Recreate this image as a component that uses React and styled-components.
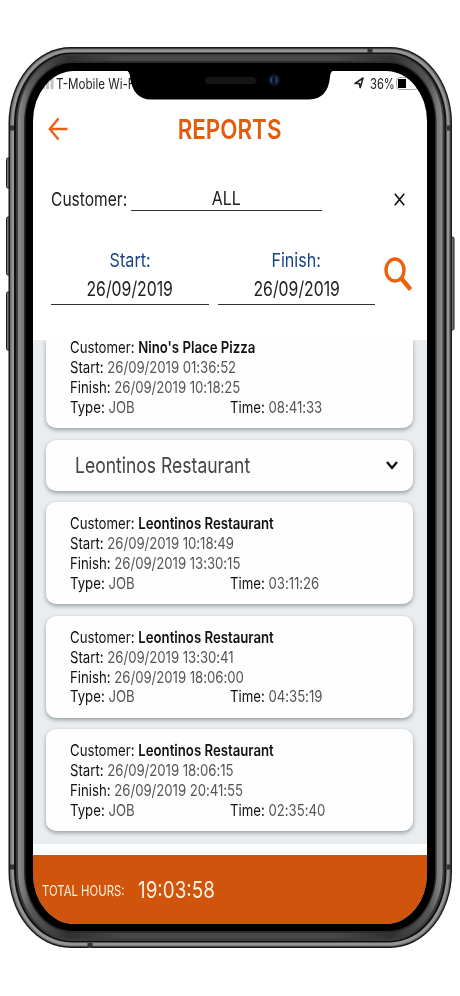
import React from 'react';
import styled, { createGlobalStyle } from 'styled-components';

const reports = [
  { customer: 'Leontinos Restaurant', start: '26/09/2019 10:18:49', finish: '26/09/2019 13:30:15', time: '03:11:26' },
  { customer: 'Leontinos Restaurant', start: '26/09/2019 13:30:41', finish: '26/09/2019 18:06:00', time: '04:35:19' },
  { customer: 'Leontinos Restaurant', start: '26/09/2019 18:06:15', finish: '26/09/2019 20:41:55', time: '02:35:40' },
];

const PhoneFrame = () => (
  <FrameSvg viewBox="0 0 460 996">
    <defs>
      <mask id="screen">
        <rect width="460" height="996" fill="#fff" />
        <rect x="33" y="71" width="394" height="853" rx="41" ry="50" fill="#000" />
      </mask>
      <linearGradient id="bevel">
        <stop offset="0" stopColor="#8c8c8c" />
        <stop offset=".03" stopColor="#585858" />
        <stop offset=".12" stopColor="#303030" />
        <stop offset=".25" stopColor="#484848" />
        <stop offset=".75" stopColor="#484848" />
        <stop offset=".88" stopColor="#303030" />
        <stop offset=".97" stopColor="#585858" />
        <stop offset="1" stopColor="#8c8c8c" />
      </linearGradient>
    </defs>
    <g fill="#777" stroke="#1b1b1b">
      <rect x="6.5" y="158" width="5" height="30" rx="1.5" />
      <rect x="6.5" y="217" width="5" height="58" rx="1.5" />
      <rect x="6.5" y="292" width="5" height="58" rx="1.5" />
      <rect x="449.5" y="237" width="4.5" height="93" rx="1.5" />
    </g>
    <g mask="url(#screen)">
      <rect x="8.5" y="47" width="443.5" height="901" rx="62" ry="76" fill="#181818" />
      <rect x="10" y="48.5" width="440.5" height="898" rx="60" ry="74" fill="#6c6c6c" />
      <rect x="11.5" y="49.5" width="437.5" height="896" rx="59" ry="73" fill="#959595" />
      <rect x="14" y="52.5" width="432.5" height="890" rx="57" ry="71" fill="#111" />
      <rect x="16" y="54" width="428.5" height="887" rx="56" ry="69" fill="#3c3c3c" />
      <rect x="18" y="55.5" width="424.5" height="883" rx="54" ry="67" fill="url(#bevel)" />
      <rect x="24" y="61" width="412.5" height="872" rx="49" ry="61" fill="#2c2c2c" />
      <rect x="25.5" y="63" width="409.5" height="868" rx="47" ry="58" fill="#000" />
    </g>
    <path d="M10 128h4M447 128h4M10 867h4M447 867h4M370 48v5M90 943v5" stroke="#333" strokeWidth="5" />
    <path d="M126 70Q130 72 130 77Q133 99.500 151 99.500H309Q328 99 330 77Q330 71 335 70Z" />
    <rect x="205" y="77" width="51" height="7" rx="3.5" fill="#151515" />
    <circle cx="274" cy="80" r="6" fill="#0d1320" />
    <path d="M272 77q-2 3 0 6M276 77q2 3 0 6" fill="none" stroke="#284f87" strokeWidth="1.3" />
  </FrameSvg>
);

const ReportCard = ({ customer, start, finish, time, cut }) => (
  <Card $cut={cut}>
    <Line>Customer: <b>{customer}</b></Line>
    <Line>Start: <span>{start}</span></Line>
    <Line>Finish: <span>{finish}</span></Line>
    <LineGroup>
      <Line>Type: <span>JOB</span></Line>
      <Line>Time: <span>{time}</span></Line>
    </LineGroup>
  </Card>
);

const App = () => (
  <Page>
    <GlobalStyle />
    <Screen>
      <StatusBar>
        <StatusIcon viewBox="0 0 18 14" width="18" height="14">
          <path d="M1 8h3v5H1zM5 6h3v7H5zM9 4h3v9H9zM13.500 2h3v11h-3z" fill="#c4c4c4" />
        </StatusIcon>
        <Carrier><Text $size={14} $scale={0.83}>T-Mobile Wi-Fi</Text></Carrier>
        <StatusIcon viewBox="0 0 10 12" width="10" height="12">
          <path d="M1 6.400 9 1 6.200 10.600 5.300 6.500Z" fill="none" stroke="#222" strokeWidth="1.6" strokeLinejoin="round" />
        </StatusIcon>
        <Percent><Text $size={14} $scale={0.8}>36%</Text></Percent>
        <StatusIcon viewBox="0 0 23 13" width="23" height="13">
          <rect x=".5" y=".5" width="21" height="12" rx="3" fill="none" stroke="#aaa" />
          <path d="M2 2h8v9H2z" />
        </StatusIcon>
      </StatusBar>

      <TitleBar>
        <svg width="20" height="24" viewBox="0 0 20 24" fill="none" stroke="#e8601a" strokeWidth="2.4">
          <path d="M10.500 1.500 1.800 12 10.500 22.500M1.800 12H19.500" />
        </svg>
        <Title><Text $size={27} $weight={600} $scale={0.83} $origin="center">REPORTS</Text></Title>
      </TitleBar>

      <CustomerRow>
        <CustomerLabel><Text $size={19} $scale={0.82}>Customer:</Text></CustomerLabel>
        <CustomerInput><Text $size={19} $scale={0.84} $origin="center">ALL</Text></CustomerInput>
        <svg width="11" height="13" viewBox="0 0 11 13" stroke="#111" strokeWidth="1.6">
          <path d="M.8.8 10.200 12.200M10.200.8.8 12.200" />
        </svg>
      </CustomerRow>

      <DateRow>
        <DateField>
          <DateLabel><Text $size={19} $scale={0.85} $origin="center">Start:</Text></DateLabel>
          <DateInput><Text $size={20} $scale={0.79} $origin="center">26/09/2019</Text></DateInput>
        </DateField>
        <DateField>
          <DateLabel><Text $size={19} $scale={0.85} $origin="center">Finish:</Text></DateLabel>
          <DateInput><Text $size={20} $scale={0.79} $origin="center">26/09/2019</Text></DateInput>
        </DateField>
        <SearchIcon width="29" height="35" viewBox="0 0 29 35" fill="none" stroke="#eb610e">
          <ellipse cx="11" cy="13" rx="9" ry="11" strokeWidth="3.4" />
          <path d="m17.500 21.500 9 11" strokeWidth="4.4" />
        </SearchIcon>
      </DateRow>

      <List>
        <ReportCard cut customer="Nino's Place Pizza" start="26/09/2019 01:36:52" finish="26/09/2019 10:18:25" time="08:41:33" />
        <GroupHeader>
          <Text $size={22} $scale={0.797}>Leontinos Restaurant</Text>
          <svg width="12" height="9" viewBox="0 0 12 9" fill="none" stroke="#111" strokeWidth="2.4">
            <path d="m1 1 5 6 5-6" />
          </svg>
        </GroupHeader>
        {reports.map((report) => (
          <ReportCard key={report.start} {...report} />
        ))}
      </List>

      <Footer>
        <FooterLabel><Text $size={14} $scale={0.81}>TOTAL HOURS:</Text></FooterLabel>
        <Text $size={23} $scale={0.82}>19:03:58</Text>
      </Footer>
    </Screen>
    <PhoneFrame />
  </Page>
);

const GlobalStyle = createGlobalStyle`
  * {
    box-sizing: border-box;
  }
  body {
    margin: 0;
    background: #fff;
    font-family: Inter, "Liberation Sans", sans-serif;
    color: #222;
  }
  svg {
    flex: none;
  }
`;

const Page = styled.div`
  position: relative;
  width: 460px;
  height: 996px;
  padding: 71px 33px 72px;
  overflow: hidden;
`;

const Screen = styled.div`
  display: flex;
  flex-direction: column;
  width: 394px;
  height: 853px;
  overflow: hidden;
  border-radius: 41px / 50px;
  background: #fff;
`;

const FrameSvg = styled.svg`
  position: absolute;
  inset: 0;
  width: 460px;
  height: 996px;
  pointer-events: none;
`;

const Text = styled.span`
  display: inline-block;
  white-space: nowrap;
  font-size: ${({ $size }) => $size}px;
  font-weight: ${({ $weight }) => $weight || 400};
  transform: scaleX(${({ $scale }) => $scale});
  transform-origin: ${({ $origin }) => $origin || 'left'};
`;

const StatusBar = styled.div`
  display: flex;
  align-items: center;
  height: 24px;
  padding-left: 4px;
`;

const StatusIcon = styled.svg`
  display: block;
`;

const Carrier = styled.div`
  width: 299px;
  padding-left: 1px;
`;

const Percent = styled.div`
  width: 32px;
  padding-left: 6px;
`;

const TitleBar = styled.div`
  display: flex;
  align-items: center;
  height: 67px;
  padding-left: 15px;
`;

const Title = styled.div`
  width: 323px;
  padding-top: 2px;
  text-align: center;
  color: #e35b0c;
`;

const CustomerRow = styled.div`
  display: flex;
  align-items: center;
  height: 73px;
  padding: 1px 0 0 18px;
`;

const CustomerLabel = styled.div`
  width: 80px;
`;

const CustomerInput = styled.div`
  width: 191px;
  height: 24px;
  margin-right: 72px;
  border-bottom: 1.5px solid #333;
  text-align: center;
  line-height: 24px;
`;

const DateRow = styled.div`
  display: flex;
  gap: 9px;
  height: 105px;
  padding: 11px 0 0 18px;
`;

const DateField = styled.div`
  width: 157.5px;
  text-align: center;
`;

const DateLabel = styled.div`
  height: 28px;
  line-height: 29px;
  color: #17437f;
`;

const DateInput = styled.div`
  height: 31px;
  line-height: 31px;
  border-bottom: 1.5px solid #333;
`;

const SearchIcon = styled.svg`
  margin-top: 11px;
`;

const List = styled.div`
  display: flex;
  flex-direction: column;
  gap: 11.5px;
  height: 504px;
  padding: 0 14px 0 13px;
  overflow: hidden;
  background: #e9edef;
`;

const Card = styled.div`
  flex: none;
  display: flex;
  flex-direction: column;
  justify-content: flex-end;
  height: ${({ $cut }) => ($cut ? 88 : 102)}px;
  padding: 0 24px ${({ $cut }) => ($cut ? 10.4 : 10.4)}px;
  border-radius: ${({ $cut }) => ($cut ? '0 0 10px 10px' : '10px')};
  background: #fefefe;
  box-shadow: 0 2px 4px rgba(40, 50, 55, 0.42);
`;

const Line = styled.div`
  height: 19.8px;
  font-size: 16px;
  line-height: 19.8px;
  white-space: nowrap;
  color: #111;
  transform: scaleX(0.825);
  transform-origin: left;
  span {
    color: #555;
    letter-spacing: -0.05px;
  }
  b {
    font-weight: 600;
  }
`;

const LineGroup = styled.div`
  display: grid;
  grid-template-columns: 160px 158px;
`;

const GroupHeader = styled.div`
  display: flex;
  flex: none;
  align-items: center;
  justify-content: space-between;
  height: 51px;
  padding: 0 15px 0 29px;
  border-radius: 10px;
  background: #fefefe;
  box-shadow: 0 2px 4px rgba(40, 50, 55, 0.42);
  color: #444;
`;

const Footer = styled.div`
  display: flex;
  align-items: center;
  height: 69px;
  margin-top: 11px;
  padding-left: 9px;
  background: #d0540b;
  color: #fff0e0;
`;

const FooterLabel = styled.div`
  width: 96px;
`;

export default App;
